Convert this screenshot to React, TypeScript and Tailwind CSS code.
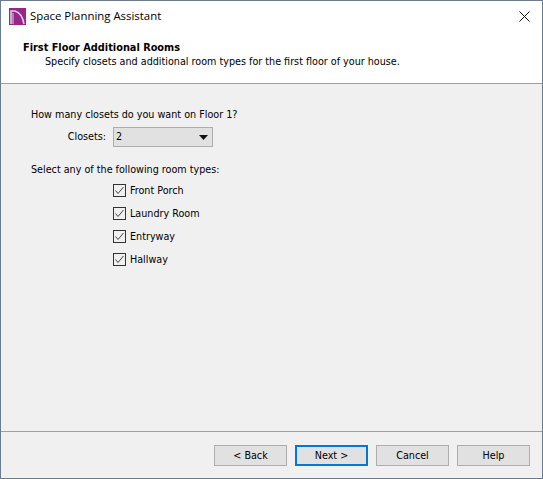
import React from "react";

const font = { fontFamily: '"DejaVu Sans Condensed", "DejaVu Sans", sans-serif' };

function Check({ label }: { label: string }) {
  return (
    <div className="flex h-[23px] items-center gap-[4px]">
      <div className="flex h-[13px] w-[13px] items-center justify-center border border-[#333333] bg-[#f0f0f0]">
        <svg width="11" height="11" viewBox="0 0 11 11" fill="none">
          <path d="M1.5 5.5 L4 8.5 L9.5 2" stroke="#444444" strokeWidth="1" />
        </svg>
      </div>
      <span>{label}</span>
    </div>
  );
}

function Btn({ label, primary }: { label: string; primary?: boolean }) {
  return (
    <div
      className={
        primary
          ? "flex h-[21px] w-[73px] items-center justify-center border-2 border-[#0078d7] bg-[#e1e1e1]"
          : "flex h-[21px] w-[73px] items-center justify-center border border-[#adadad] bg-[#e1e1e1]"
      }
    >
      {label}
    </div>
  );
}

export default function App() {
  return (
    <div
      style={font}
      className="flex h-[479px] w-[543px] flex-col border border-[#6d7b8f] bg-[#f0f0f0] text-[10.7px] leading-[16px] text-black"
    >
      <div className="flex h-[30px] items-center bg-white pl-[8px] pr-[12px]">
        <svg width="17" height="17" viewBox="0 0 17 17" className="shrink-0">
          <rect width="17" height="17" fill="#96268a" />
          <path d="M2 16 V3 H6 Q13 5 15 16" fill="none" stroke="#e8c8e4" strokeWidth="1.6" />
          <path d="M4 16 V5" stroke="#e8c8e4" strokeWidth="1" />
        </svg>
        <span className="ml-[4px] mt-[-1px] font-['Open_Sans'] text-[11.4px]">Space Planning Assistant</span>
        <svg width="11" height="11" viewBox="0 0 11 11" className="ml-auto">
          <path d="M0.5 0.5 L10.5 10.5 M10.5 0.5 L0.5 10.5" stroke="#111111" strokeWidth="1" />
        </svg>
      </div>
      <div className="flex h-[53px] flex-col border-b border-[#a0a0a0] bg-white pl-[22px] pt-[9px]">
        <div className="text-[10.85px] font-bold">First Floor Additional Rooms</div>
        <div className="mt-[-2px] pl-[22px]">Specify closets and additional room types for the first floor of your house.</div>
      </div>
      <div className="flex flex-1 flex-col pl-[30px] pt-[23px]">
        <div>How many closets do you want on Floor 1?</div>
        <div className="mt-[3px] flex h-[22px] items-center">
          <span className="w-[82px] pr-[7px] text-right">Closets:</span>
          <div className="flex h-[20px] w-[100px] items-center justify-between border border-[#adadad] bg-[#e1e1e1] pl-[2px] pr-[4px]">
            <span>2</span>
            <svg width="9" height="5" viewBox="0 0 9 5">
              <path d="M0 0 H9 L4.5 5 Z" fill="#111111" />
            </svg>
          </div>
        </div>
        <div className="mt-[14px]">Select any of the following room types:</div>
        <div className="mt-[1px] flex flex-col pl-[82px]">
          <Check label="Front Porch" />
          <Check label="Laundry Room" />
          <Check label="Entryway" />
          <Check label="Hallway" />
        </div>
      </div>
      <div className="flex h-[47px] items-start justify-end gap-[8px] border-t border-[#a0a0a0] pr-[12px] pt-[13px]">
        <Btn label="< Back" />
        <Btn label="Next >" primary />
        <Btn label="Cancel" />
        <Btn label="Help" />
      </div>
    </div>
  );
}
